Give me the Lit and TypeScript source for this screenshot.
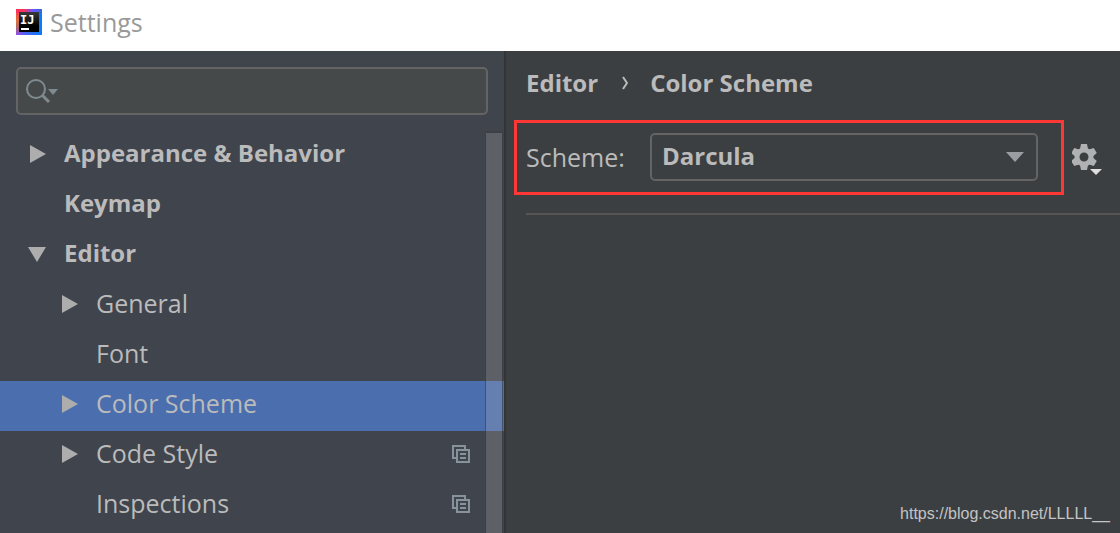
import { LitElement, html, svg, css, nothing } from "lit";
import { customElement, state } from "lit/decorators.js";

interface TreeItem {
  label: string;
  level: 0 | 1;
  toggle?: "open" | "closed";
  perProject?: boolean;
}

const ITEMS: TreeItem[] = [
  { label: "Appearance & Behavior", level: 0, toggle: "closed" },
  { label: "Keymap", level: 0 },
  { label: "Editor", level: 0, toggle: "open" },
  { label: "General", level: 1, toggle: "closed" },
  { label: "Font", level: 1 },
  { label: "Color Scheme", level: 1, toggle: "closed" },
  { label: "Code Style", level: 1, toggle: "closed", perProject: true },
  { label: "Inspections", level: 1, perProject: true },
];

const GEAR_ANGLES = [0, 60, 120, 180, 240, 300];

@customElement("settings-title")
export class SettingsTitle extends LitElement {
  static styles = css`
    :host {
      display: flex;
      align-items: center;
      gap: 8px;
      height: 51px;
      box-sizing: border-box;
      padding: 0 16px 7px;
      background: #fff;
      color: #999;
    }
    svg {
      flex: none;
    }
    h1 {
      margin: 0;
      font-size: 25px;
      line-height: 34px;
      font-weight: 400;
    }
  `;

  render() {
    return html`
      <svg width="26" height="26" viewBox="0 0 26 26" aria-hidden="true">
        <defs>
          <linearGradient id="face" x1="0" y1="0" x2="0" y2="1">
            <stop offset="0" stop-color="#3a3a3a" />
            <stop offset="0.7" stop-color="#000" />
          </linearGradient>
          <linearGradient id="top" x1="0" y1="0" x2="1" y2="0">
            <stop offset="0.3" stop-color="#fe315d" />
            <stop offset="0.65" stop-color="#6b57ff" />
            <stop offset="1" stop-color="#2f6bd8" />
          </linearGradient>
          <linearGradient id="left" x1="0" y1="0" x2="0" y2="1">
            <stop offset="0" stop-color="#fe315d" />
            <stop offset="0.45" stop-color="#e0713a" />
            <stop offset="0.7" stop-color="#b06a6a" />
            <stop offset="1" stop-color="#8a4ff0" />
          </linearGradient>
          <linearGradient id="bottom" x1="0" y1="0" x2="1" y2="0">
            <stop offset="0" stop-color="#8a4ff0" />
            <stop offset="0.5" stop-color="#3a6af0" />
            <stop offset="1" stop-color="#087cfa" />
          </linearGradient>
        </defs>
        <rect width="26" height="26" fill="#087cfa" />
        <rect y="22" width="26" height="4" fill="url(#bottom)" />
        <rect width="4" height="26" fill="url(#left)" />
        <rect width="26" height="4" fill="url(#top)" />
        <rect x="3" y="3" width="20" height="20" fill="url(#face)" />
        <text x="4" y="15" fill="#fff" font-family="DejaVu Sans Mono, monospace" font-size="12" font-weight="700">IJ</text>
        <rect x="5" y="19" width="8" height="2" fill="#fff" />
      </svg>
      <h1>Settings</h1>
    `;
  }
}

@customElement("settings-sidebar")
export class SettingsSidebar extends LitElement {
  @state() private selected = "Color Scheme";

  static styles = css`
    :host {
      display: flex;
      flex-direction: column;
      gap: 16px;
      padding-top: 16px;
      background: linear-gradient(#3f464a, #40444d 24px);
      border-right: 2px solid #333537;
    }
    .search {
      display: flex;
      align-items: center;
      gap: 4px;
      height: 48px;
      box-sizing: border-box;
      margin: 0 16px;
      padding: 0 8px;
      background: #45494a;
      border: 2px solid #646464;
      border-radius: 5px;
    }
    .search svg {
      flex: none;
    }
    .search input {
      flex: 1;
      min-width: 0;
      padding: 0;
      border: 0;
      outline: 0;
      background: none;
      color: #bbb;
      font: inherit;
    }
    .tree {
      position: relative;
      flex: 1;
    }
    ul {
      list-style: none;
      margin: 0;
      padding: 0;
    }
    .row {
      display: flex;
      align-items: center;
      width: 100%;
      height: 50px;
      padding: 0 34px 4px 28px;
      border: 0;
      background: none;
      color: #bbb;
      font: inherit;
      font-size: 24px;
      font-weight: 700;
      text-align: left;
    }
    .child {
      padding-left: 60px;
      font-size: 25px;
      font-weight: 400;
    }
    .selected {
      background: #4b6eaf;
    }
    .arrow {
      flex: none;
      width: 20px;
      height: 20px;
      margin-right: 16px;
      fill: #adadad;
    }
    .label {
      flex: 1;
      padding-bottom: 2px;
    }
    .project {
      flex: none;
    }
    .scrollbar {
      position: absolute;
      top: 0;
      bottom: 0;
      right: 1px;
      width: 16px;
      border: 1px solid rgba(60, 62, 66, 0.6);
      border-width: 2px 1px 0;
      background: rgba(179, 180, 184, 0.25);
      background-clip: padding-box;
      pointer-events: none;
    }
  `;

  private arrow(item: TreeItem) {
    const d = item.toggle === "open" ? "M0 3H18L9 18Z" : "M2 1V19L18 10Z";
    return html`<svg class="arrow" viewBox="0 0 20 20" aria-hidden="true">
      ${item.toggle ? svg`<path d=${d} />` : nothing}
    </svg>`;
  }

  private row(item: TreeItem) {
    const classes = ["row", item.level ? "child" : "", item.label === this.selected ? "selected" : ""];
    return html`<li>
      <button class=${classes.join(" ").trim()} @click=${() => (this.selected = item.label)}>
        ${this.arrow(item)}<span class="label">${item.label}</span>
        ${item.perProject
          ? html`<svg class="project" width="18" height="18" viewBox="0 0 18 18" fill="#87939a" aria-hidden="true">
              <path fill-rule="evenodd" d="M0 0H14V4H12V2H2V12H4V14H0ZM4 4H18V18H4ZM6 6V16H16V6ZM8 8H14V10H8ZM8 12H14V14H8Z" />
            </svg>`
          : nothing}
      </button>
    </li>`;
  }

  render() {
    return html`
      <div class="search">
        <svg width="34" height="26" viewBox="0 0 34 26" aria-hidden="true">
          <circle cx="10" cy="11" r="9" fill="none" stroke="#7f8b91" stroke-width="2" />
          <path d="M16 17L23 24" stroke="#7f8b91" stroke-width="3" />
          <path d="M22 11H32L27 17Z" fill="#7f8b91" />
        </svg>
        <input type="text" aria-label="Search settings" />
      </div>
      <nav class="tree">
        <ul>${ITEMS.map((item) => this.row(item))}</ul>
        <div class="scrollbar"></div>
      </nav>
    `;
  }
}

@customElement("scheme-panel")
export class SchemePanel extends LitElement {
  static styles = css`
    :host {
      display: flex;
      flex-direction: column;
      min-width: 0;
      background: #3c3f41;
      color: #bbb;
    }
    .crumbs {
      display: flex;
      align-items: center;
      gap: 22px;
      padding: 15px 20px 20px;
      font-size: 24px;
      line-height: 34px;
      font-weight: 700;
    }
    .bar {
      display: flex;
      align-items: center;
      gap: 8px;
      padding: 0 16px 0 8px;
    }
    .field {
      flex: 1;
      display: flex;
      align-items: center;
      min-width: 0;
      padding: 10px 23px 11px 9px;
      border: 3px solid #ff3735;
    }
    label {
      flex: none;
      width: 124px;
    }
    .combo {
      flex: 1;
      display: grid;
      align-items: center;
      min-width: 0;
    }
    .combo > * {
      grid-area: 1 / 1;
    }
    select {
      appearance: none;
      width: 100%;
      height: 48px;
      padding: 0 40px 2px 10px;
      border: 2px solid #646464;
      border-radius: 5px;
      background: #3c3f41;
      color: #bbb;
      font: inherit;
      font-size: 24px;
      font-weight: 700;
    }
    .drop {
      justify-self: end;
      margin-right: 14px;
      pointer-events: none;
    }
    .gear {
      flex: none;
      display: block;
      padding: 0 0 2px;
      border: 0;
      background: none;
    }
    .gear svg {
      display: block;
    }
    hr {
      width: auto;
      height: 2px;
      margin: 18px 0 0 20px;
      border: 0;
      background: #555;
    }
    .source {
      align-self: flex-end;
      margin: auto 10px 8px;
      color: #c3c4c5;
      font: 16px/22px "Liberation Sans", sans-serif;
      text-decoration: none;
    }
  `;

  render() {
    return html`
      <nav class="crumbs" aria-label="Breadcrumb">
        <span>Editor</span>
        <svg width="8" height="14" viewBox="0 0 8 14" aria-hidden="true">
          <path d="M3 1L7 7L3 13" fill="none" stroke="#bbb" stroke-width="2" />
        </svg>
        <span>Color Scheme</span>
      </nav>
      <div class="bar">
        <div class="field">
          <label for="scheme">Scheme:</label>
          <div class="combo">
            <select id="scheme">
              <option>Darcula</option>
            </select>
            <svg class="drop" width="18" height="10" viewBox="0 0 18 10" aria-hidden="true">
              <path d="M0 0H18L9 10Z" fill="#9a9da1" />
            </svg>
          </div>
        </div>
        <button class="gear" aria-label="Scheme actions">
          <svg width="32" height="36" viewBox="-12 -18 32 36" aria-hidden="true">
            <circle r="7" fill="none" stroke="#afb1b3" stroke-width="5" />
            ${GEAR_ANGLES.map(
              (a) => svg`<path d="M-4 -8L-3 -13H3L4 -8Z" fill="#afb1b3" transform="rotate(${a})" />`
            )}
            <path d="M6 12H18L12 18Z" fill="#dfdfdf" />
          </svg>
        </button>
      </div>
      <hr />
      <a class="source" href="https://blog.csdn.net/LLLLL__">https://blog.csdn.net/LLLLL__</a>
    `;
  }
}

@customElement("app-root")
export class AppRoot extends LitElement {
  static styles = css`
    :host {
      display: flex;
      flex-direction: column;
      min-height: 100vh;
      font: 25px/34px "Open Sans", "Noto Sans", sans-serif;
    }
    .body {
      flex: 1;
      display: grid;
      grid-template-columns: calc(45% + 2px) 1fr;
    }
  `;

  render() {
    return html`
      <settings-title></settings-title>
      <div class="body">
        <settings-sidebar></settings-sidebar>
        <scheme-panel></scheme-panel>
      </div>
    `;
  }
}
